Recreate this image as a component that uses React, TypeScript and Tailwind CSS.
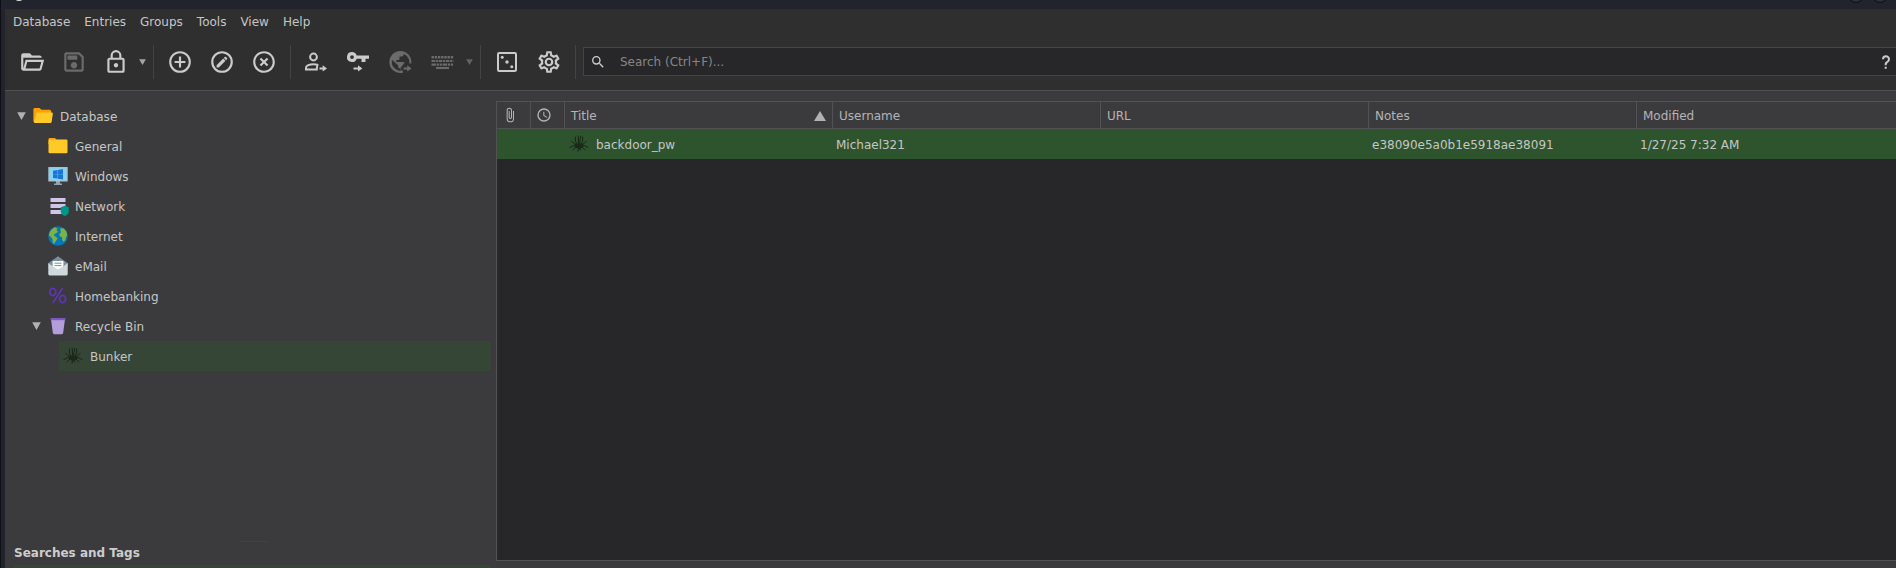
import React from 'react';

type IconProps = { className?: string };

function Glyph({ d, className }: { d: string; className?: string }) {
  return (
    <svg viewBox="0 0 24 24" fill="currentColor" aria-hidden="true" className={className}>
      <path d={d} />
    </svg>
  );
}

const PATHS = {
  open: 'M6.1,10L4,18V8H21A2,2 0 0,0 19,6H12L10,4H4A2,2 0 0,0 2,6V18A2,2 0 0,0 4,20H19C19.9,20 20.7,19.4 20.9,18.5L23.2,10H6.1M19,18H6L7.6,12H20.6L19,18Z',
  save: 'M17 3H5C3.89 3 3 3.9 3 5V19C3 20.1 3.89 21 5 21H19C20.1 21 21 20.1 21 19V7L17 3M19 19H5V5H16.17L19 7.83V19M12 12C10.34 12 9 13.34 9 15S10.34 18 12 18 15 16.66 15 15 13.66 12 12 12M6 6H15V10H6V6Z',
  lock: 'M12,17C10.89,17 10,16.1 10,15C10,13.89 10.89,13 12,13A2,2 0 0,1 14,15A2,2 0 0,1 12,17M18,20V10H6V20H18M18,8A2,2 0 0,1 20,10V20A2,2 0 0,1 18,22H6C4.89,22 4,21.1 4,20V10C4,8.89 4.89,8 6,8H7V6A5,5 0 0,1 12,1A5,5 0 0,1 17,6V8H18M12,3A3,3 0 0,0 9,6V8H15V6A3,3 0 0,0 12,3Z',
  add: 'M12,20C7.59,20 4,16.41 4,12C4,7.59 7.59,4 12,4C16.41,4 20,7.59 20,12C20,16.41 16.41,20 12,20M12,2A10,10 0 0,0 2,12A10,10 0 0,0 12,22A10,10 0 0,0 22,12A10,10 0 0,0 12,2M13,7H11V11H7V13H11V17H13V13H17V11H13V7Z',
  edit: 'M12,2A10,10 0 0,0 2,12A10,10 0 0,0 12,22A10,10 0 0,0 22,12A10,10 0 0,0 12,2M12,4A8,8 0 0,1 20,12A8,8 0 0,1 12,20A8,8 0 0,1 4,12A8,8 0 0,1 12,4M15.1,7.07C14.96,7.07 14.82,7.12 14.71,7.23L13.7,8.2L15.8,10.3L16.77,9.3C17,9.07 17,8.72 16.77,8.5L15.5,7.23C15.39,7.12 15.25,7.07 15.1,7.07M13.13,8.77L7,14.91V17H9.1L15.23,10.87L13.13,8.77Z',
  remove: 'M12,20C7.59,20 4,16.41 4,12C4,7.59 7.59,4 12,4C16.41,4 20,7.59 20,12C20,16.41 16.41,20 12,20M12,2C6.47,2 2,6.47 2,12C2,17.53 6.47,22 12,22C17.53,22 22,17.53 22,12C22,6.47 17.53,2 12,2M14.59,8L12,10.59L9.41,8L8,9.41L10.59,12L8,14.59L9.41,16L12,13.41L14.59,16L16,14.59L13.41,12L16,9.41L14.59,8Z',
  cog: 'M12,8A4,4 0 0,1 16,12A4,4 0 0,1 12,16A4,4 0 0,1 8,12A4,4 0 0,1 12,8M12,10A2,2 0 0,0 10,12A2,2 0 0,0 12,14A2,2 0 0,0 14,12A2,2 0 0,0 12,10M10,22C9.75,22 9.54,21.82 9.5,21.58L9.13,18.93C8.5,18.68 7.96,18.34 7.44,17.94L4.95,18.95C4.73,19.03 4.46,18.95 4.34,18.73L2.34,15.27C2.21,15.05 2.27,14.78 2.46,14.63L4.57,12.97L4.5,12L4.57,11L2.46,9.37C2.27,9.22 2.21,8.95 2.34,8.73L4.34,5.27C4.46,5.05 4.73,4.96 4.95,5.05L7.44,6.05C7.96,5.66 8.5,5.32 9.13,5.07L9.5,2.42C9.54,2.18 9.75,2 10,2H14C14.25,2 14.46,2.18 14.5,2.42L14.87,5.07C15.5,5.32 16.04,5.66 16.56,6.05L19.05,5.05C19.27,4.96 19.54,5.05 19.66,5.27L21.66,8.73C21.79,8.95 21.73,9.22 21.54,9.37L19.43,11L19.5,12L19.43,13L21.54,14.63C21.73,14.78 21.79,15.05 21.66,15.27L19.66,18.73C19.54,18.95 19.27,19.04 19.05,18.95L16.56,17.95C16.04,18.34 15.5,18.68 14.87,18.93L14.5,21.58C14.46,21.82 14.25,22 14,22H10M11.25,4L10.88,6.61C9.68,6.86 8.62,7.5 7.85,8.39L5.44,7.35L4.69,8.65L6.8,10.2C6.4,11.37 6.4,12.64 6.8,13.8L4.68,15.36L5.43,16.66L7.86,15.62C8.63,16.5 9.68,17.14 10.87,17.38L11.24,20H12.76L13.13,17.39C14.32,17.14 15.37,16.5 16.14,15.62L18.57,16.66L19.32,15.36L17.2,13.81C17.6,12.64 17.6,11.37 17.2,10.2L19.31,8.65L18.56,7.35L16.15,8.39C15.38,7.5 14.32,6.86 13.12,6.62L12.75,4H11.25Z',
  search: 'M9.5,3A6.5,6.5 0 0,1 16,9.5C16,11.11 15.41,12.59 14.44,13.73L14.71,14H15.5L20.5,19L19,20.5L14,15.5V14.71L13.73,14.44C12.59,15.41 11.11,16 9.5,16A6.5,6.5 0 0,1 3,9.5A6.5,6.5 0 0,1 9.5,3M9.5,5C7,5 5,7 5,9.5C5,12 7,14 9.5,14C12,14 14,12 14,9.5C14,7 12,5 9.5,5Z',
  help: 'M10,19H13V22H10V19M12,2C17.35,2.22 19.68,7.62 16.5,11.67C15.67,12.67 14.33,13.33 13.67,14.17C13,15 13,16 13,17H10C10,15.33 10,13.92 10.67,12.92C11.33,11.92 12.67,11.33 13.5,10.67C15.92,8.43 15.32,5.26 12,5A3,3 0 0,0 9,8H6A6,6 0 0,1 12,2Z',
  clip: 'M16.5,6V17.5A4,4 0 0,1 12.5,21.5A4,4 0 0,1 8.5,17.5V5A2.5,2.5 0 0,1 11,2.5A2.5,2.5 0 0,1 13.5,5V15.5A1,1 0 0,1 12.5,16.5A1,1 0 0,1 11.5,15.5V6H10V15.5A2.5,2.5 0 0,0 12.5,18A2.5,2.5 0 0,0 15,15.5V5A4,4 0 0,0 11,1A4,4 0 0,0 7,5V17.5A5.5,5.5 0 0,0 12.5,23A5.5,5.5 0 0,0 18,17.5V6H16.5Z',
  clock: 'M12,20A8,8 0 0,0 20,12A8,8 0 0,0 12,4A8,8 0 0,0 4,12A8,8 0 0,0 12,20M12,2A10,10 0 0,1 22,12A10,10 0 0,1 12,22C6.47,22 2,17.5 2,12A10,10 0 0,1 12,2M12.5,7V12.25L17,14.92L16.25,16.15L11,13V7H12.5Z',
};

const TOOL = 'size-[26px]';

function UserIcon() {
  return (
    <svg viewBox="0 0 26 26" className={TOOL} fill="none" stroke="currentColor" strokeWidth="2" aria-hidden="true">
      <circle cx="9.5" cy="8" r="3.4" />
      <path d="M13.8 20.6H2V18.8C2 16.6 5.6 15.2 9.5 15.2C10.9 15.2 12.3 15.4 13.4 15.8L12.6 20.6" />
      <path d="M15.5 18.4H18.7V16.2L23 19.4L18.7 22.6V20.4H15.5Z" fill="currentColor" stroke="none" />
    </svg>
  );
}

function KeyIcon() {
  return (
    <svg viewBox="0 0 26 26" className={TOOL} fill="currentColor" aria-hidden="true">
      <path d="M6 3a5 5 0 1 0 4.7 6.7H15.5V13H19.5V9.7H23V6.6H10.7A5 5 0 0 0 6 3ZM6 6.2a1.9 1.9 0 1 1 0 3.8a1.9 1.9 0 0 1 0-3.8Z" fillRule="evenodd" />
      <path d="M7.5 18.4H12V16.2L16.4 19.4L12 22.6V20.4H7.5Z" />
    </svg>
  );
}

function GlobeIcon() {
  return (
    <svg viewBox="0 0 26 26" className={TOOL} fill="currentColor" aria-hidden="true">
      <path
        fillRule="evenodd"
        d="M12.5 2a11 11 0 1 0 2.4 21.7v-2.2l-2.8 .2V19.5a2 2 0 0 1-2-2V16.3L4.1 10.9A8.9 8.9 0 0 0 11.1 21.8L12.5 21.9V19L16.8 13.6 14.3 13H8.3V10.9H10.5a1 1 0 0 0 1-1V7.6H13.7a2 2 0 0 0 2-2V5A8.8 8.8 0 0 1 21.3 14.5H23.3A11 11 0 0 0 12.5 2Z"
      />
      <path d="M15.5 18.4H19.2V16.2L23.5 19.4L19.2 22.6V20.4H15.5Z" />
    </svg>
  );
}

function KeyboardIcon() {
  return (
    <svg viewBox="0 0 26 26" className={TOOL} fill="none" stroke="currentColor" aria-hidden="true">
      <path d="M1.5 8.2H23.5" strokeWidth="2.4" strokeDasharray="2.4 0.8" />
      <path d="M1.5 12H23.5" strokeWidth="2.2" strokeDasharray="3.4 0.8 2.2 0.8" />
      <path d="M1.5 15.6H23.5" strokeWidth="2.2" strokeDasharray="4.4 0.8 2.2 0.8 2.2 0.8" />
      <path d="M6 19H19" strokeWidth="2" />
    </svg>
  );
}

function DiceIcon() {
  return (
    <svg viewBox="0 0 26 26" className={TOOL} fill="currentColor" aria-hidden="true">
      <rect x="4" y="4" width="18" height="18" rx="1.2" fill="none" stroke="currentColor" strokeWidth="2" />
      <circle cx="8.2" cy="8.2" r="1.5" />
      <circle cx="13" cy="13" r="1.7" />
      <circle cx="17.8" cy="17.8" r="1.5" />
    </svg>
  );
}

function Down({ className }: IconProps) {
  return (
    <svg viewBox="0 0 10 8" className={className} fill="currentColor" aria-hidden="true" preserveAspectRatio="none">
      <path d="M0.2 0.2H9.8L5 7.9Z" />
    </svg>
  );
}

const ITEM = 'size-5 shrink-0';

function FolderOpen() {
  return (
    <svg viewBox="0 0 20 20" className={ITEM} aria-hidden="true">
      <path d="M1.5 2H6.5L8.5 3.8H16.5A1.8 1.8 0 0 1 18.3 5.5V16.5H2A1.6 1.6 0 0 1 .4 15V3.3A1.4 1.4 0 0 1 1.5 2Z" fill="#ffa000" />
      <path d="M4.6 6.5H18.5A1.2 1.2 0 0 1 19.8 7.9L18.6 15.8A1.6 1.6 0 0 1 17 17H2.2A1.4 1.4 0 0 1 1 15.6L3.2 7.6A1.5 1.5 0 0 1 4.6 6.5Z" fill="#ffca28" />
    </svg>
  );
}
function Folder() {
  return (
    <svg viewBox="0 0 20 20" className={ITEM} aria-hidden="true">
      <path d="M1.7 2H7L8.6 3.8V8H.5V3.3A1.3 1.3 0 0 1 1.7 2Z" fill="#ffa000" />
      <rect x=".5" y="3.6" width="19" height="13.6" rx="1.3" fill="#ffca28" />
    </svg>
  );
}
function Monitor() {
  return (
    <svg viewBox="0 0 20 20" className={ITEM} aria-hidden="true">
      <path d="M8 15H12V17.5H14V19H6V17.5H8Z" fill="#90a4ae" />
      <rect x=".3" y="1" width="19.4" height="14.6" rx=".6" fill="#b0bec5" />
      <rect x="1.5" y="2.3" width="17" height="12" fill="#81d4fa" />
      <path d="M5 4.8L9.4 4V8.2H5ZM9.8 3.9L15 3V8.2H9.8ZM5 8.5H9.4V12.6L5 11.9ZM9.8 8.5H15V13.5L9.8 12.7Z" fill="#1976d2" />
    </svg>
  );
}
function Server() {
  return (
    <svg viewBox="0 0 22 20" className="h-5 w-[22px] shrink-0 -mr-[2px]" aria-hidden="true">
      <path d="M2.5 2H17.5V6H2.5ZM2.5 8H17.5V12H2.5ZM2.5 14H17.5V18H2.5Z" fill="#d1c4e9" />
      <path d="M12.7 11.3L16.8 9.8L20.8 11.3V15.5C20.8 17.8 19 19.3 16.8 20C14.4 19.3 12.7 17.6 12.7 15.5Z" fill="#009688" />
    </svg>
  );
}
function World() {
  return (
    <svg viewBox="0 0 20 20" className={ITEM} aria-hidden="true">
      <circle cx="10" cy="10" r="9.8" fill="#0277bd" />
      <path d="M7 1.3L9.3 2.5 8.6 4.6 10.2 5.8 8 7.3 6.4 8.2 5.8 9.5 7.6 10.4 9.5 12.3 8.6 14.3 6.8 16.4 6 18.3 4.7 16 4.5 13 2.6 10.8 1 9.2C1.2 5.8 3.8 2.5 7 1.3Z" fill="#7cb342" />
      <path d="M12.5 2.2L15.8 2.6 18.3 5.6 19.2 9 18 11.3 17.2 14.4 15.2 15.8 14 13.5 14.2 11.3 12 10.5 11.3 8.2 13 6.2 12.3 4.6Z" fill="#7cb342" />
    </svg>
  );
}
function Mail() {
  return (
    <svg viewBox="0 0 20 20" className={ITEM} aria-hidden="true">
      <path d="M.5 7L10 .3L19.5 7V12H.5Z" fill="#78909c" />
      <path d="M4.6 5H15.4V14H4.6Z" fill="#fff" />
      <path d="M6.5 7.2H13.5M6.5 9.6H13.5" stroke="#78909c" strokeWidth="1" />
      <path d="M.3 7L4.6 10.3L10 13.6L15.4 10.3L19.7 7V18A1.4 1.4 0 0 1 18.3 19.4H1.7A1.4 1.4 0 0 1 .3 18Z" fill="#cfd8dc" />
    </svg>
  );
}
function Percent() {
  return (
    <svg viewBox="0 0 20 20" className={ITEM} fill="none" stroke="#5e35b1" strokeWidth="1.8" aria-hidden="true">
      <ellipse cx="4.8" cy="6" rx="3" ry="3.6" />
      <ellipse cx="14.6" cy="13" rx="3" ry="3.6" />
      <path d="M14.6 2L4.8 17" />
    </svg>
  );
}
function Bin() {
  return (
    <svg viewBox="0 0 20 20" className={ITEM} aria-hidden="true">
      <path d="M3 3H17L15.2 16.8A1.6 1.6 0 0 1 13.7 18.2H6.3A1.6 1.6 0 0 1 4.8 16.8Z" fill="#b39ddb" />
      <path d="M2.6 2H17.4V4.2H2.6Z" fill="#7e57c2" />
    </svg>
  );
}
function Spider() {
  return (
    <svg viewBox="0 0 20 20" className={ITEM} fill="none" stroke="#192519" strokeWidth="1" aria-hidden="true">
      <path d="M8 10L6.4 7.2V2.6M12 10L13.6 7.2V2.6M9.5 9L9.2 1.6M10.6 9L11.6 2M8 11.8L4.6 9.2L2.4 6.8M12 11.8L15.4 9.2L17.6 6.8M8.4 12.6L4.6 11.6L.6 13.6M11.6 12.6L15.4 11.6L19.4 13.6M8.8 13L6 13.8L3.6 16.2M11.2 13L14 13.8L16.4 16.2M9.4 13.4L9 17.6M10.6 13.4L11.8 16.4" />
      <path d="M5.6 12L6.6 9 8.2 10.2 10 7.6 11.8 10.2 13.4 9 14.4 12 12.6 14 10.6 14.6 10 16.6 9.4 14.6 7.4 14Z" fill="#1b291b" stroke="none" />
    </svg>
  );
}

function ToolButton({ label, disabled, children }: { label: string; disabled?: boolean; children: React.ReactNode }) {
  return (
    <button
      type="button"
      aria-label={label}
      disabled={disabled}
      className="flex h-[54px] w-[42px] shrink-0 items-center justify-center disabled:text-[#6b6b6b]"
    >
      {children}
    </button>
  );
}

function MenuArrow({ label, disabled }: { label: string; disabled?: boolean }) {
  return (
    <button
      type="button"
      aria-label={label}
      disabled={disabled}
      className="flex h-[54px] w-[11px] shrink-0 items-center justify-center text-[#a5a5a7] disabled:text-[#626262]"
    >
      <Down className="h-[6px] w-[7px]" />
    </button>
  );
}

function Separator() {
  return (
    <div className="mt-[10px] flex h-[34px] w-[11px] shrink-0 justify-center">
      <div className="w-px bg-[#434343]" />
    </div>
  );
}

type Node = { name: string; icon: React.ReactNode; selected?: boolean; children?: Node[] };

const TREE: Node[] = [
  {
    name: 'Database',
    icon: <FolderOpen />,
    children: [
      { name: 'General', icon: <Folder /> },
      { name: 'Windows', icon: <Monitor /> },
      { name: 'Network', icon: <Server /> },
      { name: 'Internet', icon: <World /> },
      { name: 'eMail', icon: <Mail /> },
      { name: 'Homebanking', icon: <Percent /> },
      {
        name: 'Recycle Bin',
        icon: <Bin />,
        children: [{ name: 'Bunker', icon: <Spider />, selected: true }],
      },
    ],
  },
];

function Tree({ nodes }: { nodes: Node[] }) {
  return (
    <ul>
      {nodes.map((n) => (
        <li key={n.name}>
          <div className="flex h-[30px]">
            <div className="flex w-[15px] shrink-0 items-center justify-center text-[#b0b0b5]">
              {n.children && <Down className="h-2 w-[9px]" />}
            </div>
            <button
              type="button"
              className={
                n.selected
                  ? 'flex flex-1 items-center gap-[7px] bg-[#354536] pl-1 text-left'
                  : 'flex flex-1 items-center gap-[7px] pl-1 text-left'
              }
            >
              {n.icon}
              <span className="pt-[2px]">{n.name}</span>
            </button>
          </div>
          {n.children && (
            <div className="pl-[15px]">
              <Tree nodes={n.children} />
            </div>
          )}
        </li>
      ))}
    </ul>
  );
}

const MENUS = ['Database', 'Entries', 'Groups', 'Tools', 'View', 'Help'];
const HEAD = 'h-[27px] border-b border-l border-[#525254] p-0 pt-[2px] pl-[6px] text-left font-normal text-[#b4b4b8]';

export default function App() {
  return (
    <div className="flex min-h-screen flex-col border-l border-[#0e1016] bg-[#21242d] pl-1 font-['DejaVu_Sans',sans-serif] text-[12px] leading-4 text-[#c6c6c6]">
      <div className="flex h-[9px] shrink-0 items-end justify-between overflow-hidden pr-2 pb-[6px] pl-[6px]">
        <div className="flex h-4 w-4 items-end justify-center pb-[2px]">
          <div className="size-3 rounded-full bg-[#dfe5da]" />
        </div>
        <div className="flex gap-2">
          <div className="size-4 rounded-full border border-[#0b0c10] bg-[#2b303b]" />
          <div className="size-4 rounded-full border border-[#0b0c10] bg-[#2b303b]" />
        </div>
      </div>

      <header className="border-b border-[#505052] bg-[#2f2f2f]">
        <nav className="flex h-[26px] items-center gap-[14px] pl-2">
          {MENUS.map((m) => (
            <button key={m} type="button">
              {m}
            </button>
          ))}
        </nav>
        <div className="flex h-[55px] items-start pl-[6px] text-[#cbcbcd]">
          <ToolButton label="Open database"><Glyph d={PATHS.open} className={TOOL} /></ToolButton>
          <ToolButton label="Save database" disabled><Glyph d={PATHS.save} className={TOOL} /></ToolButton>
          <ToolButton label="Lock database"><Glyph d={PATHS.lock} className={TOOL} /></ToolButton>
          <MenuArrow label="Lock options" />
          <Separator />
          <ToolButton label="New entry"><Glyph d={PATHS.add} className={TOOL} /></ToolButton>
          <ToolButton label="Edit entry"><Glyph d={PATHS.edit} className={TOOL} /></ToolButton>
          <ToolButton label="Delete entry"><Glyph d={PATHS.remove} className={TOOL} /></ToolButton>
          <Separator />
          <ToolButton label="Copy username"><UserIcon /></ToolButton>
          <ToolButton label="Copy password"><KeyIcon /></ToolButton>
          <ToolButton label="Copy URL" disabled><GlobeIcon /></ToolButton>
          <ToolButton label="Auto-type" disabled><KeyboardIcon /></ToolButton>
          <MenuArrow label="Auto-type options" disabled />
          <Separator />
          <ToolButton label="Password generator"><DiceIcon /></ToolButton>
          <ToolButton label="Settings"><Glyph d={PATHS.cog} className={TOOL} /></ToolButton>
          <Separator />
          <div className="mt-3 ml-[2px] flex h-[29px] flex-1 items-center border border-r-0 border-[#444446] bg-[#272729] pr-[2px] pl-[6px]">
            <Glyph d={PATHS.search} className="size-4 shrink-0" />
            <input
              type="text"
              aria-label="Search"
              placeholder="Search (Ctrl+F)..."
              className="ml-[14px] min-w-0 flex-1 bg-transparent outline-none placeholder:text-[#868688] placeholder:opacity-100"
            />
            <button type="button" aria-label="Search help">
              <Glyph d={PATHS.help} className="size-4" />
            </button>
          </div>
        </div>
      </header>

      <div className="flex flex-1 bg-[#3b3b3d] pt-[10px]">
        <aside className="flex w-[491px] shrink-0 flex-col pr-[5px] pl-[9px]">
          <div className="flex-1">
            <Tree nodes={TREE} />
          </div>
          <div className="mx-auto h-px w-7 bg-[#434345]" />
          <h2 className="pt-[3px] pb-1 font-bold text-[#cdcdcd]">Searches and Tags</h2>
          <div className="h-[3px] bg-[#354536]" />
        </aside>
        <main className="mb-[7px] flex-1 border-y border-l border-[#525254] bg-[#272729]">
          <table className="w-full table-fixed border-separate border-spacing-0">
            <colgroup>
              <col className="w-[33px]" />
              <col className="w-[34px]" />
              <col className="w-[268px]" />
              <col className="w-[268px]" />
              <col className="w-[268px]" />
              <col className="w-[268px]" />
              <col />
            </colgroup>
            <thead className="bg-[#3b3b3d]">
              <tr>
                <th aria-label="Attachments" className="h-[27px] border-b border-[#525254] p-0">
                  <Glyph d={PATHS.clip} className="ml-[5px] size-4 text-[#b4b4b8]" />
                </th>
                <th aria-label="Expires" className="h-[27px] border-b border-l border-[#525254] p-0">
                  <Glyph d={PATHS.clock} className="ml-[5px] size-4 text-[#b4b4b8]" />
                </th>
                <th className={HEAD}>
                  <div className="flex items-center justify-between pr-[6px]">
                    Title
                    <svg viewBox="0 0 12 10" className="h-[10px] w-3" fill="#b0b0b5" aria-hidden="true">
                      <path d="M6 0L12 10H0Z" />
                    </svg>
                  </div>
                </th>
                <th className={HEAD}>Username</th>
                <th className={HEAD}>URL</th>
                <th className={HEAD}>Notes</th>
                <th className={HEAD}>Modified</th>
              </tr>
            </thead>
            <tbody>
              <tr className="h-[30px] bg-[#2d542d]">
                <td className="p-0" />
                <td className="p-0" />
                <td className="p-0 pl-[5px]">
                  <div className="flex items-center gap-[7px]">
                    <Spider />
                    <span className="pt-[2px]">backdoor_pw</span>
                  </div>
                </td>
                <td className="p-0 pt-[2px] pl-1">Michael321</td>
                <td className="p-0" />
                <td className="p-0 pt-[2px] pl-1">e38090e5a0b1e5918ae38091</td>
                <td className="p-0 pt-[2px] pl-1">1/27/25 7:32 AM</td>
              </tr>
            </tbody>
          </table>
        </main>
      </div>
    </div>
  );
}
